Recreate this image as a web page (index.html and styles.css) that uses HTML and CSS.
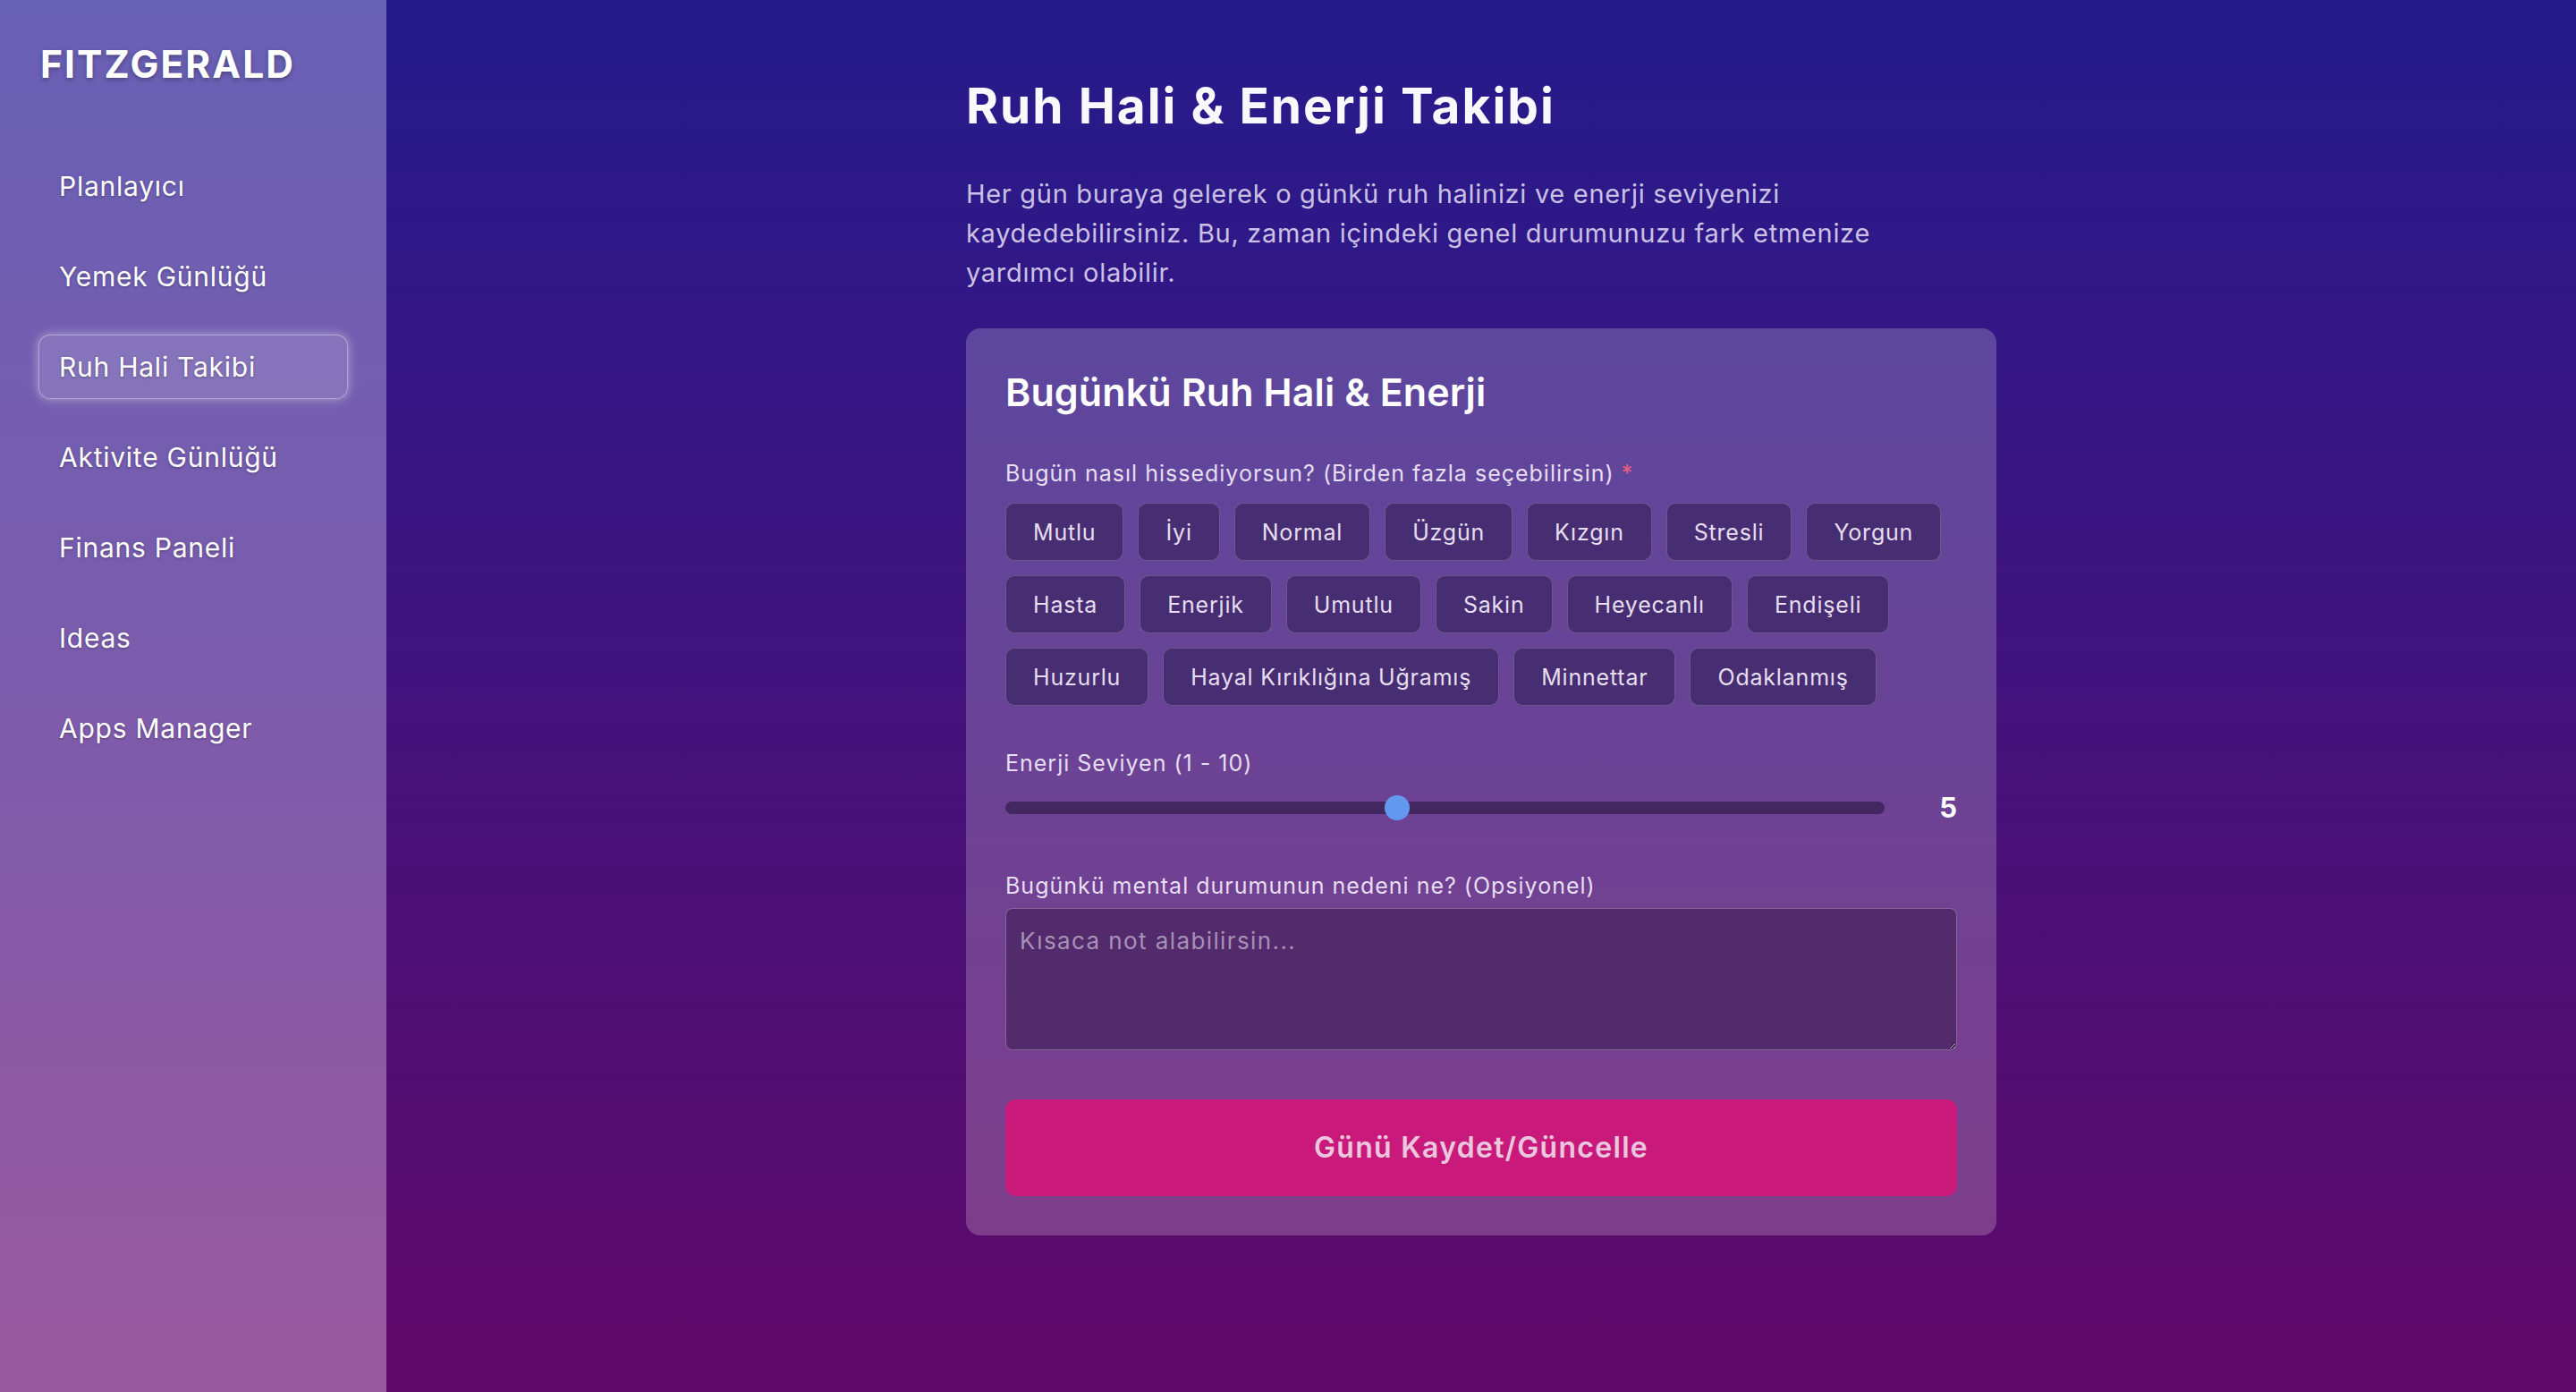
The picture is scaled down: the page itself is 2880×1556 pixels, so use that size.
FILE: index.html
```html
<!DOCTYPE html>
<html lang="tr">
<head>
<meta charset="utf-8">
<title>Ruh Hali & Enerji Takibi</title>
<link rel="stylesheet" href="styles.css">
</head>
<body>
<div class="app">
  <aside class="sidebar">
    <div class="logo">FITZGERALD</div>
    <nav class="nav">
      <a class="nav-item">Planlayıcı</a>
      <a class="nav-item">Yemek Günlüğü</a>
      <a class="nav-item active">Ruh Hali Takibi</a>
      <a class="nav-item">Aktivite Günlüğü</a>
      <a class="nav-item">Finans Paneli</a>
      <a class="nav-item">Ideas</a>
      <a class="nav-item">Apps Manager</a>
    </nav>
  </aside>
  <main class="main">
    <div class="content">
      <h1 class="page-title">Ruh Hali &amp; Enerji Takibi</h1>
      <p class="intro">Her gün buraya gelerek o günkü ruh halinizi ve enerji seviyenizi kaydedebilirsiniz. Bu, zaman içindeki genel durumunuzu fark etmenize yardımcı olabilir.</p>
      <form class="card">
        <h2 class="card-title">Bugünkü Ruh Hali &amp; Enerji</h2>
        <section class="field field-moods">
          <label class="field-label">Bugün nasıl hissediyorsun? (Birden fazla seçebilirsin) <span class="req">*</span></label>
          <div class="chips">
            <button type="button" class="chip">Mutlu</button>
            <button type="button" class="chip">İyi</button>
            <button type="button" class="chip">Normal</button>
            <button type="button" class="chip">Üzgün</button>
            <button type="button" class="chip">Kızgın</button>
            <button type="button" class="chip">Stresli</button>
            <button type="button" class="chip">Yorgun</button>
            <button type="button" class="chip">Hasta</button>
            <button type="button" class="chip">Enerjik</button>
            <button type="button" class="chip">Umutlu</button>
            <button type="button" class="chip">Sakin</button>
            <button type="button" class="chip">Heyecanlı</button>
            <button type="button" class="chip">Endişeli</button>
            <button type="button" class="chip">Huzurlu</button>
            <button type="button" class="chip">Hayal Kırıklığına Uğramış</button>
            <button type="button" class="chip">Minnettar</button>
            <button type="button" class="chip">Odaklanmış</button>
          </div>
        </section>
        <section class="field field-energy">
          <label class="field-label">Enerji Seviyen (1 - 10)</label>
          <div class="slider-row">
            <input class="slider" type="range" min="1" max="10" value="5">
            <span class="slider-value">5</span>
          </div>
        </section>
        <section class="field field-note">
          <label class="field-label">Bugünkü mental durumunun nedeni ne? (Opsiyonel)</label>
          <textarea class="note" placeholder="Kısaca not alabilirsin..."></textarea>
        </section>
        <button type="button" class="save">Günü Kaydet/Güncelle</button>
      </form>
    </div>
  </main>
</div>
</body>
</html>
```

FILE: styles.css
```css
* { box-sizing: border-box; }

html, body {
  margin: 0;
  padding: 0;
  height: 100%;
}

body {
  font-family: Inter, "Noto Sans", "DejaVu Sans", sans-serif;
  color: #ffffff;
}

.app {
  display: flex;
  min-height: 100vh;
}

/* Sidebar */
.sidebar {
  width: 432px;
  flex-shrink: 0;
  padding: 46px 43px 40px;
  background: linear-gradient(180deg, #6860b5 0%, #7a5cad 45%, #9a589f 100%);
}

.logo {
  font-size: 42.5px;
  font-weight: 700;
  line-height: 1.2;
  letter-spacing: 2.1px;
  padding-left: 2px;
  color: #ffffff;
  text-shadow: 0 2px 5px rgba(0, 0, 0, 0.3);
}

.nav {
  display: flex;
  flex-direction: column;
  gap: 29px;
  margin-top: 75px;
}

.nav-item {
  display: flex;
  align-items: center;
  height: 72px;
  padding: 0 22px;
  border: 1px solid transparent;
  border-radius: 13px;
  font-size: 30px;
  letter-spacing: 0.75px;
  color: #ffffff;
  text-shadow: 0 1px 3px rgba(0, 0, 0, 0.3);
  cursor: pointer;
}

.nav-item.active {
  background: rgba(255, 255, 255, 0.14);
  border-color: rgba(255, 255, 255, 0.35);
  box-shadow: 0 0 12px rgba(255, 255, 255, 0.45);
}

/* Main */
.main {
  flex: 1;
  padding: 85px 40px 60px;
  background: linear-gradient(180deg, #251b8c 0%, #42127d 50%, #600868 100%);
}

.content {
  max-width: 1152px;
  margin: 0 auto;
}

.page-title {
  margin: 0;
  font-size: 55px;
  font-weight: 700;
  line-height: 66px;
  letter-spacing: 2px;
  color: #f8f8fd;
}

.intro {
  max-width: 1100px;
  margin: 43.5px 0 40.5px;
  font-size: 29px;
  line-height: 44px;
  letter-spacing: 0.7px;
  color: rgba(232, 224, 248, 0.85);
}

/* Card */
.card {
  padding: 45px 44px 44px;
  border-radius: 16px;
  background: linear-gradient(180deg, #5c479e 0%, #6c4294 50%, #7e3d8b 100%);
}

.card-title {
  margin: 0;
  font-size: 43px;
  font-weight: 600;
  line-height: 52px;
  letter-spacing: 0.1px;
  color: #ffffff;
}

.field-label {
  display: block;
  font-size: 25px;
  line-height: 35px;
  letter-spacing: 1px;
  color: #e6def2;
}

.req {
  color: #ec5f7e;
}

.field-moods { margin-top: 48px; }
.field-energy { margin-top: 47px; }
.field-note { margin-top: 52.4px; }

.chips {
  display: flex;
  flex-wrap: wrap;
  gap: 16px;
  margin-top: 15px;
}

.chip {
  height: 65px;
  padding: 0 30px;
  border: 1px solid rgba(255, 255, 255, 0.2);
  border-radius: 10px;
  background: #472e72;
  font-family: inherit;
  font-size: 25px;
  letter-spacing: 0.8px;
  color: #e6def0;
  cursor: pointer;
}

.slider-row {
  display: flex;
  align-items: center;
  gap: 20px;
  height: 36px;
  margin-top: 13.6px;
}

.slider {
  -webkit-appearance: none;
  appearance: none;
  flex: 1;
  height: 14px;
  margin: 0;
  border-radius: 7px;
  background: #432760;
  outline: none;
}

.slider::-webkit-slider-thumb {
  -webkit-appearance: none;
  appearance: none;
  width: 28px;
  height: 28px;
  border-radius: 50%;
  background: #6299ef;
  border: none;
  cursor: pointer;
}

.slider-value {
  width: 61px;
  text-align: right;
  font-size: 31px;
  font-weight: 700;
  color: #ffffff;
}

.note {
  display: block;
  width: 100%;
  height: 159px;
  margin-top: 6.6px;
  padding: 18px 15px;
  border: 1px solid rgba(255, 255, 255, 0.28);
  border-radius: 8px;
  background: #532a6b;
  font-family: inherit;
  font-size: 26px;
  line-height: 35px;
  letter-spacing: 1.4px;
  color: #ffffff;
  resize: vertical;
}

.note::placeholder {
  color: #a791b7;
}

.save {
  display: block;
  width: 100%;
  height: 108px;
  margin-top: 55px;
  border: none;
  border-radius: 12px;
  background: #c91a7b;
  font-family: inherit;
  font-size: 32px;
  font-weight: 600;
  letter-spacing: 1.3px;
  color: #ebc7df;
  cursor: pointer;
}
```
